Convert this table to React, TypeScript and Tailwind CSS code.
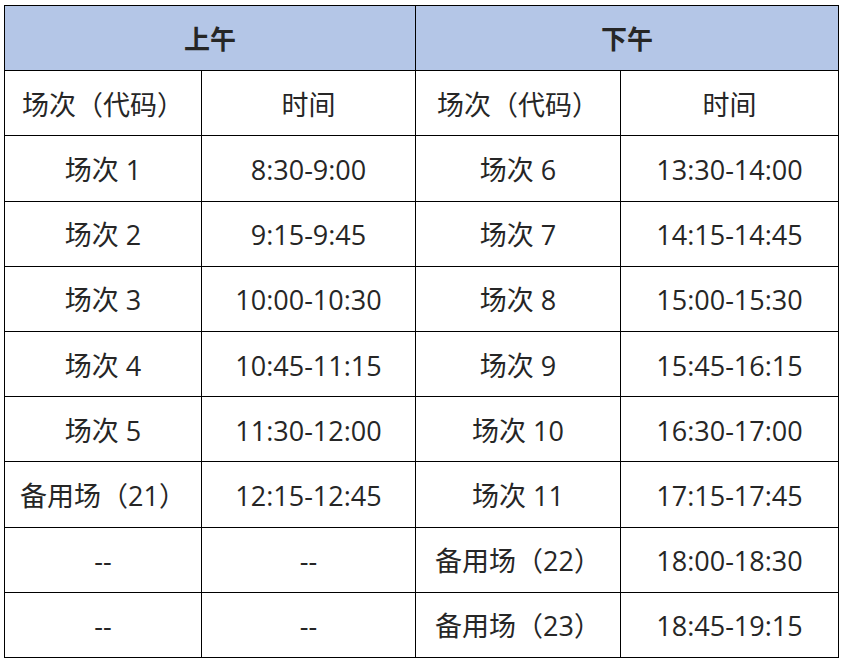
import React from 'react';

const rows: [string, string, string, string][] = [
  ['场次 1', '8:30-9:00', '场次 6', '13:30-14:00'],
  ['场次 2', '9:15-9:45', '场次 7', '14:15-14:45'],
  ['场次 3', '10:00-10:30', '场次 8', '15:00-15:30'],
  ['场次 4', '10:45-11:15', '场次 9', '15:45-16:15'],
  ['场次 5', '11:30-12:00', '场次 10', '16:30-17:00'],
  ['备用场（21）', '12:15-12:45', '场次 11', '17:15-17:45'],
  ['--', '--', '备用场（22）', '18:00-18:30'],
  ['--', '--', '备用场（23）', '18:45-19:15'],
];

const cell = 'border border-black h-[65.2px] text-center align-middle p-0 pt-[2px]';

const App: React.FC = () => {
  return (
    <div className="w-[844px] h-[661px] bg-white pt-[5px] pl-[4px]">
      <table
        className="border-collapse text-[27px] leading-none text-[#262626]"
        style={{ fontFamily: '"Open Sans", "Noto Sans CJK SC", sans-serif' }}
      >
        <colgroup>
          <col className="w-[197px]" />
          <col className="w-[214px]" />
          <col className="w-[205px]" />
          <col className="w-[218px]" />
        </colgroup>
        <thead>
          <tr className="bg-[#b4c6e7]">
            <th colSpan={2} className={`${cell} font-bold text-[26px]`}>上午</th>
            <th colSpan={2} className={`${cell} font-bold text-[26px]`}>下午</th>
          </tr>
        </thead>
        <tbody>
          <tr>
            <td className={cell}>场次（代码）</td>
            <td className={cell}>时间</td>
            <td className={cell}>场次（代码）</td>
            <td className={cell}>时间</td>
          </tr>
          {rows.map((r, i) => (
            <tr key={i}>
              {r.map((v, j) => (
                <td key={j} className={cell}>{v}</td>
              ))}
            </tr>
          ))}
        </tbody>
      </table>
    </div>
  );
};

export default App;
